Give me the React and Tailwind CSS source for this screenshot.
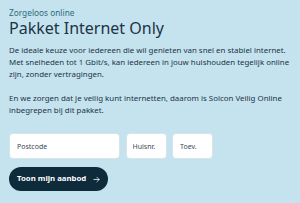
export default function App() {
  return (
    <div className="h-[203px] w-[300px] overflow-hidden bg-[#c5e3ee] px-[9px] pt-[7px] font-['Noto_Sans',sans-serif] text-[#1c3446]">
      <p className="text-[8.3px] leading-[11px] text-[#2e6b7c]">Zorgeloos online</p>
      <h1 className="text-[16px] font-normal leading-[20px]">Pakket Internet Only</h1>
      <div className="mt-[5.5px] whitespace-nowrap text-[7.9px] leading-[12px]">
        <p>
          De ideale keuze voor iedereen die wil genieten van snel en stabiel internet.
          <br />
          Met snelheden tot 1 Gbit/s, kan iedereen in jouw huishouden tegelijk online
          <br />
          zijn, zonder vertragingen.
        </p>
        <p className="mt-[12px]">
          En we zorgen dat je veilig kunt internetten, daarom is Solcon Veilig Online
          <br />
          inbegrepen bij dit pakket.
        </p>
      </div>
      <div className="mt-[17.5px] flex gap-[5.5px]">
        <input
          placeholder="Postcode"
          className="h-[26px] w-[111px] rounded-[4px] border border-[#d7e4ea] bg-white px-[7px] text-[7px] outline-none placeholder:text-[#3a4a55]"
        />
        <input
          placeholder="Huisnr."
          className="h-[26px] w-[41px] rounded-[4px] border border-[#d7e4ea] bg-white px-[6px] text-[7px] outline-none placeholder:text-[#3a4a55]"
        />
        <input
          placeholder="Toev."
          className="h-[26px] w-[41px] rounded-[4px] border border-[#d7e4ea] bg-white px-[7px] text-[7px] outline-none placeholder:text-[#3a4a55]"
        />
      </div>
      <button className="mt-[8px] flex h-[24px] w-[99px] items-center gap-[6px] rounded-full bg-[#0d2b3a] pl-[8px] text-[7.8px] font-bold text-white">
        Toon mijn aanbod
        <svg width="9" height="9" viewBox="0 0 24 24" fill="none" stroke="currentColor" strokeWidth="2" strokeLinecap="round" strokeLinejoin="round">
          <path d="M5 12h14M13 6l6 6-6 6" />
        </svg>
      </button>
    </div>
  );
}
